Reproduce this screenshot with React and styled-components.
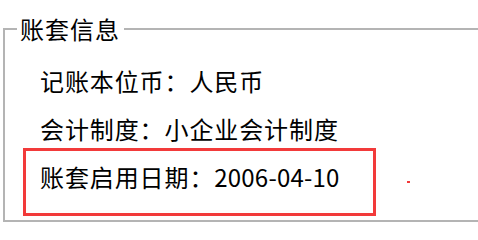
import React from "react";
import styled, { createGlobalStyle } from "styled-components";

const Global = createGlobalStyle`
  html, body { margin: 0; padding: 0; background: #ffffff; overflow: hidden; }
  body { font-family: "Noto Sans CJK SC", "Noto Sans", sans-serif; color: #000; }
`;

const Page = styled.div`
  width: 478px;
  height: 226px;
  padding-top: 15px;
  box-sizing: border-box;
  overflow: hidden;
`;

const GroupBox = styled.fieldset`
  margin: 0 -20px 0 3px;
  padding: 4px 0 4px 0;
  border: 2px solid #b4b4b4;
  min-width: 0;
`;

const Legend = styled.legend`
  margin-left: 12px;
  padding: 0 4px 0 3px;
  font-size: 24px;
  line-height: 28px;
  letter-spacing: 1px;
`;

const Row = styled.div`
  padding: 20px 0 0 35px;
  font-size: 24px;
  line-height: 28px;
  letter-spacing: 0.9px;
  white-space: nowrap;
`;

const HighlightLine = styled.div`
  display: flex;
  align-items: center;
  margin: 5px 0 0 18px;
`;

const RedBox = styled.div`
  box-sizing: border-box;
  width: 353px;
  border: 3px solid #f23a3a;
  padding: 12px 0 22px 14px;
  font-size: 24px;
  line-height: 28px;
  letter-spacing: 0.9px;
  white-space: nowrap;
`;

const DateValue = styled.span`
  font-size: 24px;
  letter-spacing: 0.2px;
`;

const Dot = styled.span`
  width: 3px;
  height: 2px;
  margin-left: 31px;
  background: #f23a3a;
`;

export default function App() {
  return (
    <Page>
      <Global />
      <GroupBox>
        <Legend>账套信息</Legend>
        <Row>记账本位币：人民币</Row>
        <Row>会计制度：小企业会计制度</Row>
        <HighlightLine>
          <RedBox>
            账套启用日期：<DateValue>2006-04-10</DateValue>
          </RedBox>
          <Dot />
        </HighlightLine>
      </GroupBox>
    </Page>
  );
}
